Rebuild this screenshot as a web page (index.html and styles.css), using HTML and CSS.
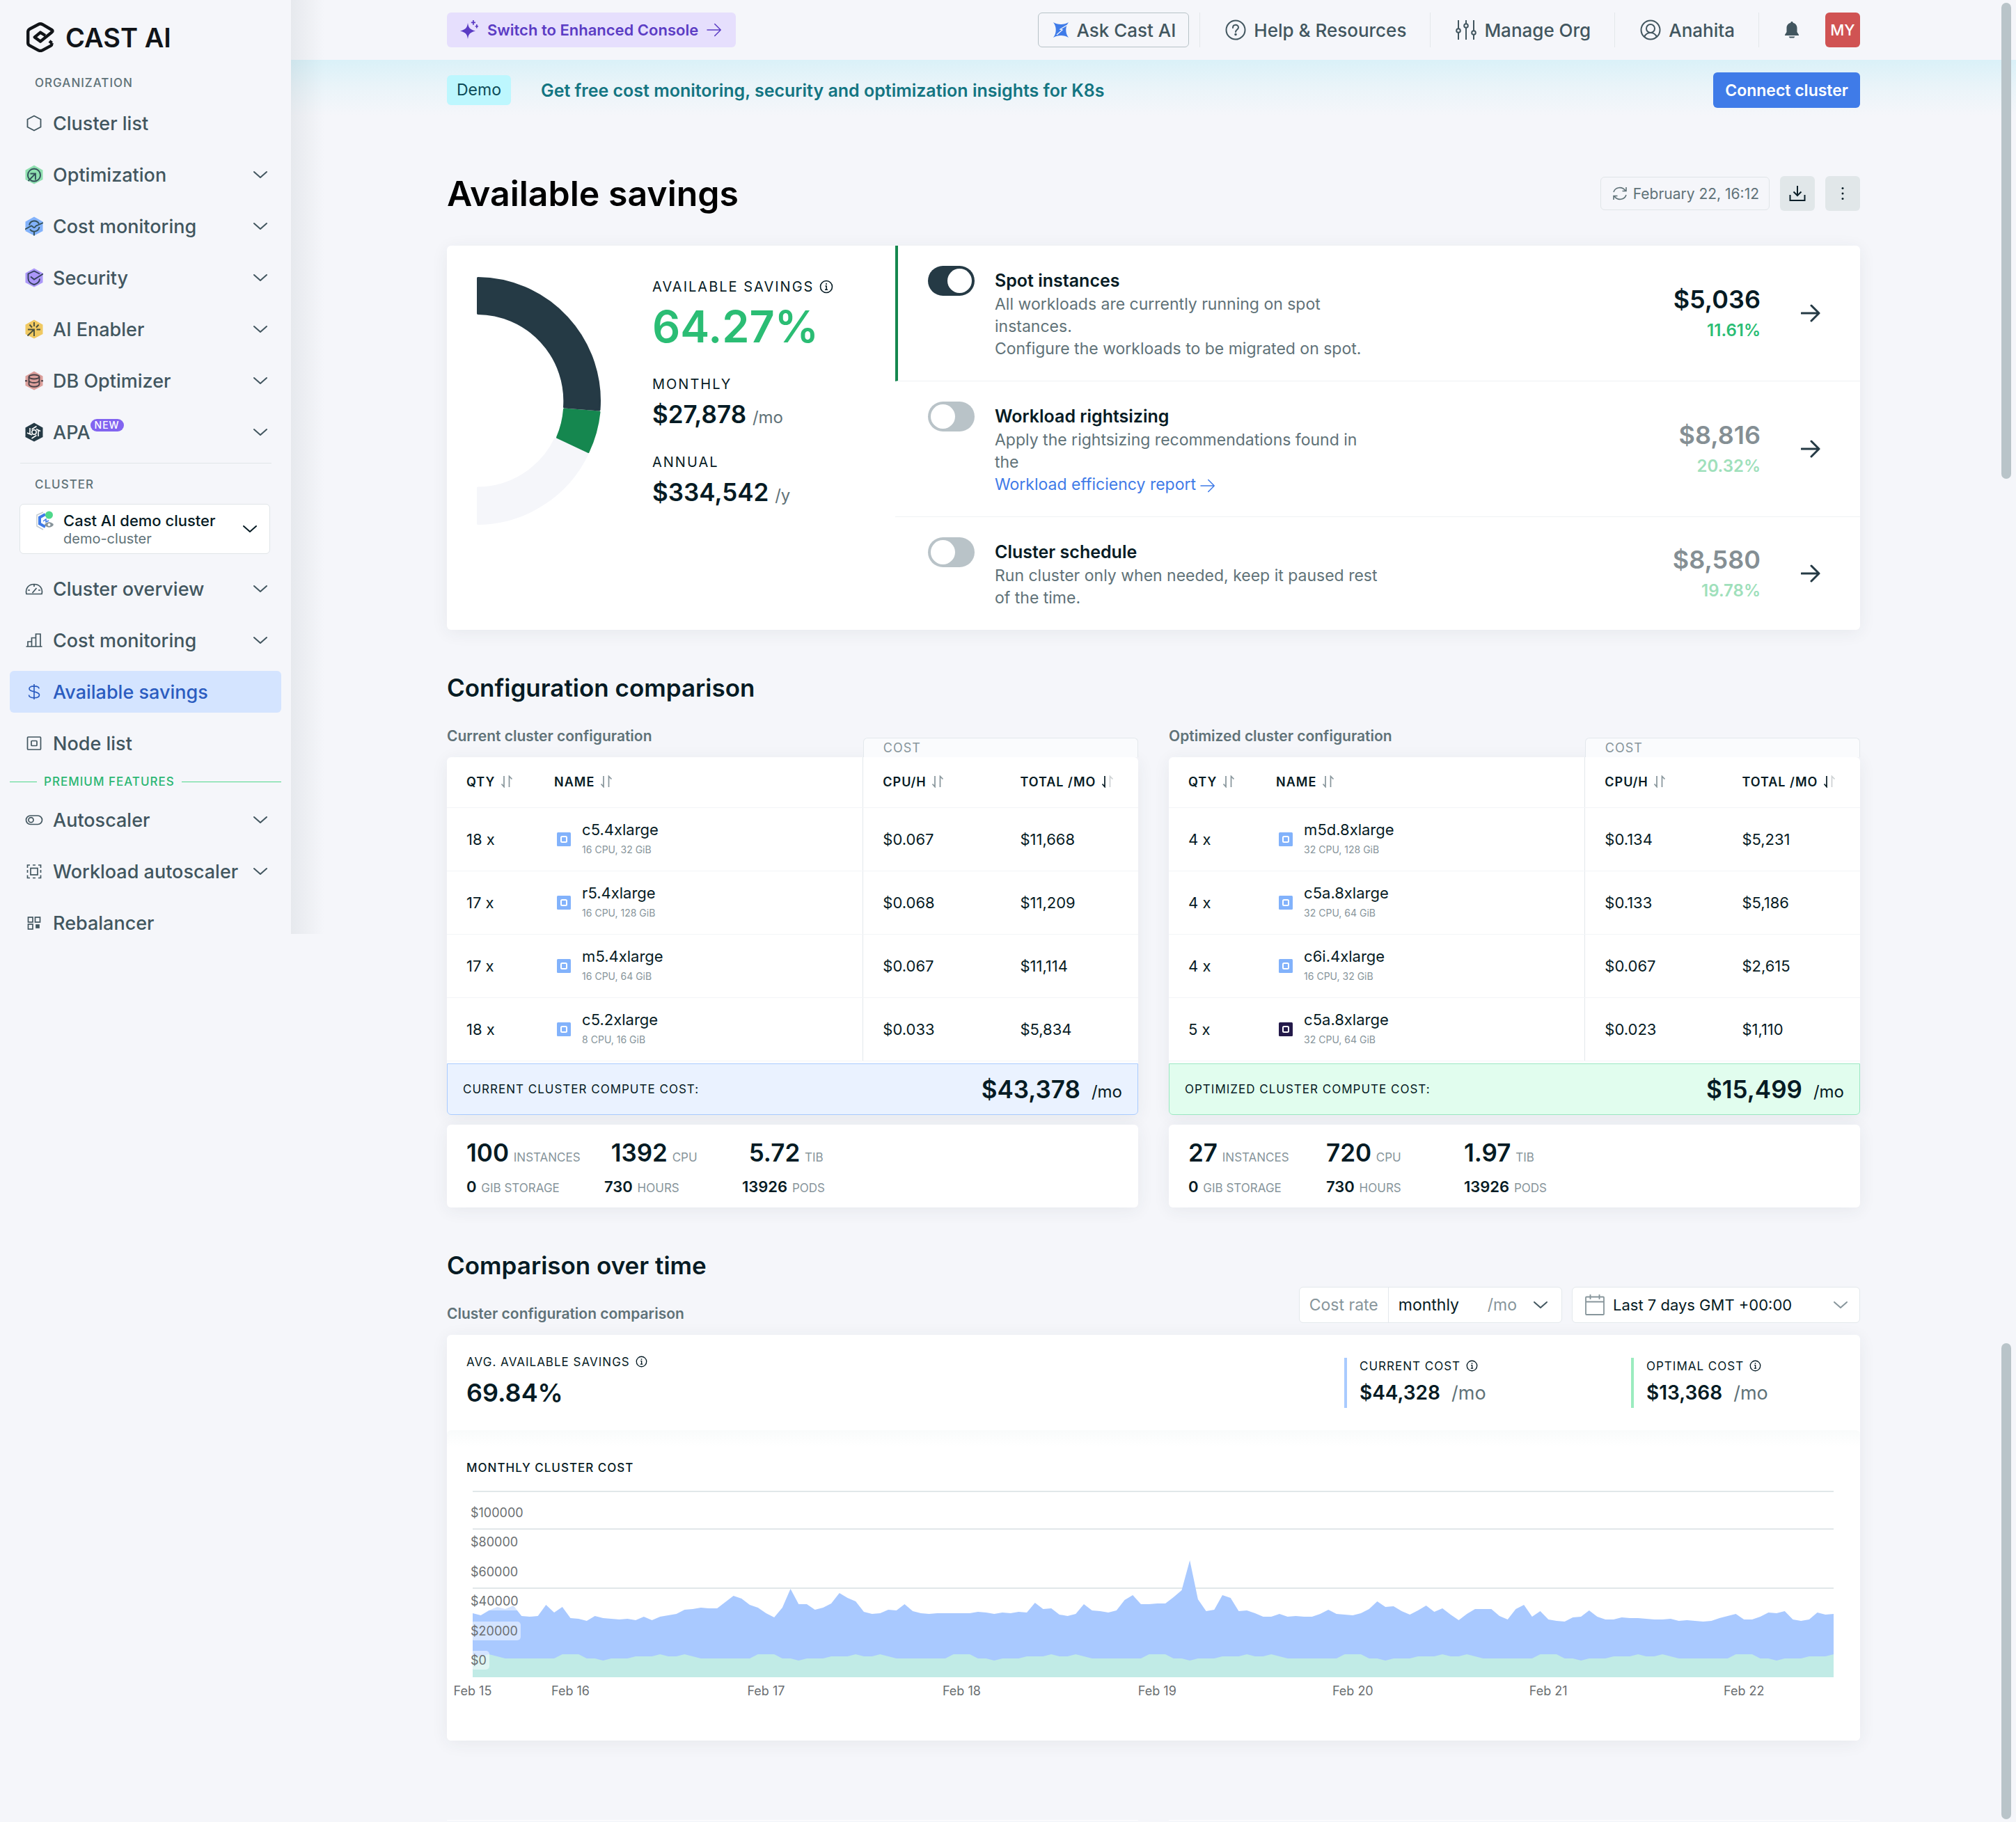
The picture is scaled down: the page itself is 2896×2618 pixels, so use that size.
FILE: index.html
```html
<!DOCTYPE html>
<html lang="en">
<head>
  <meta charset="UTF-8">
  <meta name="viewport" content="width=device-width, initial-scale=1.0">
  <title>Available savings</title>
  <link rel="stylesheet" href="styles.css">
</head>
<body>
  <!-- Shared icons -->
  <svg class="sprite" aria-hidden="true">
    <symbol id="chevron" viewBox="0 0 20 12"><path d="M1 2l9 8 9-8" fill="none" stroke="currentColor" stroke-width="2" stroke-linecap="round" stroke-linejoin="round"/></symbol>
    <symbol id="arrow" viewBox="0 0 28 26"><path d="M1 13h25M15 2l11 11-11 11" fill="none" stroke="currentColor" stroke-linecap="round" stroke-linejoin="round"/></symbol>
    <symbol id="info" viewBox="0 0 20 20"><circle cx="10" cy="10" r="8.500" fill="none" stroke="currentColor" stroke-width="1.600"/><path d="M8.400 9h1.800v5M8 14.200h4" fill="none" stroke="currentColor" stroke-width="1.500"/><circle cx="10" cy="6" r="1.100" fill="currentColor"/></symbol>
    <symbol id="sort" viewBox="0 0 18 18"><path d="M5 1v15M1.500 12.500L5 16.500V13" fill="none" stroke="currentColor" stroke-width="1.700"/><path class="sort-up" d="M12.500 17V2M12.500 5V1.500L16.500 5.500" fill="none" stroke="currentColor" stroke-width="1.700"/></symbol>
    <symbol id="node" viewBox="0 0 20 20"><rect width="20" height="20" rx="1.500" fill="currentColor"/><rect x="6" y="6" width="8" height="8" rx="1.500" fill="none" stroke="#fff" stroke-width="2"/></symbol>
  </svg>

  <div class="layout">
    <aside class="sidebar">
      <a href="#" class="logo">
        <svg viewBox="0 0 40 43" width="40" height="43" fill="none" stroke="#111418" stroke-width="4.400" stroke-linejoin="round"><path d="M36.500 30v.8c0 1.500-.6 2.400-1.800 3.100l-11.500 6.200c-2 1.100-4.400 1.100-6.400 0L4.500 33.400C3 32.600 2.200 31.400 2.200 29.800V13.500c0-1.600.8-2.800 2.300-3.700l12.300-6.600c2-1.100 4.400-1.100 6.400 0l13.300 7.800c1.400.8 1.400 2.300 0 3.200L20 27.600l-8.200-6.200L20 14.600l7 4.400M36.500 30l-3.500-3"/></svg>
        <span>CAST AI</span>
      </a>
      <p class="side-label">ORGANIZATION</p>
      <nav class="side-nav">
        <a href="#" class="side-link">
          <svg class="side-icon" viewBox="0 0 26 28" fill="none" stroke="currentColor" stroke-width="1.800"><path d="M13 3.500l9.500 5v11l-9.500 5-9.500-5v-11z"/></svg>
          <span>Cluster list</span>
        </a>
        <a href="#" class="side-link">
          <svg class="side-icon" viewBox="0 0 26 28" fill="none" stroke="#33515a" stroke-width="1.900"><path d="M13 .5l12.500 7v13.500L13 27.500.5 21V7.500z" fill="#8fe0b0" stroke="none"/><circle cx="13" cy="14.500" r="9"/><path d="M4.500 23L15 12.500M7.500 12.500H15v9"/></svg>
          <span>Optimization</span>
          <svg class="chevron"><use href="#chevron"/></svg>
        </a>
        <a href="#" class="side-link">
          <svg class="side-icon" viewBox="0 0 26 28" fill="none" stroke="#33515a" stroke-width="1.900"><path d="M13 .5l12.500 7v13.500L13 27.500.5 21V7.500z" fill="#82b2fb" stroke="none"/><path d="M0 18.500l8-4.500c2-2 3 2 5 2s2-3 4-3L26 9M6 12.500a7.500 7.500 0 0 1 14-2M20.500 15a7.500 7.500 0 0 1-13.500 3.500M13 22v5.500"/></svg>
          <span>Cost monitoring</span>
          <svg class="chevron"><use href="#chevron"/></svg>
        </a>
        <a href="#" class="side-link">
          <svg class="side-icon" viewBox="0 0 26 28" fill="none" stroke="#33415a" stroke-width="1.900"><path d="M13 .5l12.500 7v13.500L13 27.500.5 21V7.500z" fill="#ab97f8" stroke="none"/><path d="M21 8.500l-8-4-8.500 4V15c0 4 3.500 7.500 8.500 9 5-1.500 8-4.500 8-8.500M8 12.500l5 4L26 8.500"/></svg>
          <span>Security</span>
          <svg class="chevron"><use href="#chevron"/></svg>
        </a>
        <a href="#" class="side-link">
          <svg class="side-icon" viewBox="0 0 26 28" fill="none" stroke="#4a503c" stroke-width="1.900"><path d="M13 .5l12.500 7v13.500L13 27.500.5 21V7.500z" fill="#f0c962" stroke="none"/><path d="M3.500 23.500L13 14.500M4 14.500h9V24M13 4v6M6.500 7.500l3.500 4M19.500 7.500l-3.500 4M16.500 14.500H22"/></svg>
          <span>AI Enabler</span>
          <svg class="chevron"><use href="#chevron"/></svg>
        </a>
        <a href="#" class="side-link">
          <svg class="side-icon" viewBox="0 0 26 28" fill="none" stroke="#4a4247" stroke-width="1.900"><path d="M13 .5l12.500 7v13.500L13 27.500.5 21V7.500z" fill="#dc9f9b" stroke="none"/><ellipse cx="13" cy="8.500" rx="7.500" ry="3"/><path d="M5.500 8.500v10.500c0 2 3.300 3.700 7.500 3.700s7.500-1.700 7.500-3.700V8.500M5.500 13.500c0 2 3.300 3.500 7.500 3.500s7.500-1.500 7.500-3.500M0 14.200h3M23 14.200h3"/></svg>
          <span>DB Optimizer</span>
          <svg class="chevron"><use href="#chevron"/></svg>
        </a>
        <a href="#" class="side-link">
          <svg class="side-icon" viewBox="0 0 26 28" fill="none" stroke="#fff" stroke-width="1.600"><path d="M13 .5l12.500 7v13.500L13 27.500.5 21V7.500z" fill="#253a45" stroke="none"/><circle cx="13" cy="14" r="3.200"/><path d="M7 17V8M9.500 10l7-4.500M10 18l-7-3M16 9.500l6 3M19 11v9M16.500 18.500l-7 4.500"/></svg>
          <span>APA</span>
          <sup class="badge-new">NEW</sup>
          <svg class="chevron"><use href="#chevron"/></svg>
        </a>
      </nav>
      <hr class="side-line">
      <p class="side-label side-label-cluster">CLUSTER</p>
      <button type="button" class="cluster-select">
        <svg viewBox="0 0 26 28" width="26" height="28" fill="none"><path d="M11 27L2 22V6l9-4" stroke="#c3cbd0" stroke-width="1.500"/><path d="M14 5L6 9.500v9l8 4.500" stroke="#3f7be8" stroke-width="4"/><path d="M11 15l4-3v4l4-2" stroke="#3f7be8" stroke-width="1.500"/><circle cx="19.500" cy="6" r="5.500" fill="#4fd88b"/><path d="M13 20c3-5 10-5 13 0-3 5-10 5-13 0z" fill="#87939a"/><circle cx="19.500" cy="20" r="2" fill="#fff"/></svg>
        <span class="cluster-name">Cast AI demo cluster<small>demo-cluster</small></span>
        <svg class="chevron"><use href="#chevron"/></svg>
      </button>
      <nav class="side-nav">
        <a href="#" class="side-link">
          <svg class="side-icon" viewBox="0 0 26 28" fill="none" stroke="currentColor" stroke-width="1.700"><path d="M2 21.500c-2-8 3-14 11-14s13 6 11 14zM13 8v3M4 16h3M22 16h-3M10.500 20l6-7"/></svg>
          <span>Cluster overview</span>
          <svg class="chevron"><use href="#chevron"/></svg>
        </a>
        <a href="#" class="side-link">
          <svg class="side-icon" viewBox="0 0 26 28" fill="none" stroke="currentColor" stroke-width="1.700"><path d="M1.500 23h23M4 23v-7h5.500v7M9.500 16v-5.500h6V23M15.500 10.500V5H22v18"/></svg>
          <span>Cost monitoring</span>
          <svg class="chevron"><use href="#chevron"/></svg>
        </a>
        <a href="#" class="side-link active">
          <svg class="side-icon" viewBox="0 0 26 28" fill="none" stroke="currentColor" stroke-width="1.700"><path d="M13 3v22M20 9.500C20 7 17.500 5.800 13 5.800S6 7.300 6 9.800c0 5.500 14.500 2.700 14.500 8.700 0 2.700-3 4.200-7.500 4.200s-7.500-1.500-7.500-4.200"/></svg>
          <span>Available savings</span>
        </a>
        <a href="#" class="side-link">
          <svg class="side-icon" viewBox="0 0 26 28" fill="none" stroke="currentColor" stroke-width="1.700"><rect x="3.500" y="5" width="19" height="18" rx="1"/><rect x="9" y="10.500" width="8" height="7" rx="1"/></svg>
          <span>Node list</span>
        </a>
      </nav>
      <p class="premium">PREMIUM FEATURES</p>
      <nav class="side-nav">
        <a href="#" class="side-link">
          <svg class="side-icon" viewBox="0 0 26 28" fill="none" stroke="currentColor" stroke-width="1.700"><rect x="1.500" y="8" width="23" height="12.500" rx="6.200"/><circle cx="8.500" cy="14.200" r="3.500"/></svg>
          <span>Autoscaler</span>
          <svg class="chevron"><use href="#chevron"/></svg>
        </a>
        <a href="#" class="side-link">
          <svg class="side-icon" viewBox="0 0 26 28" fill="none" stroke="currentColor" stroke-width="1.700"><rect x="8" y="9.500" width="10" height="9.500"/><path d="M7 5H3.500v4M19 5h3.500v4M7 23.500H3.500v-4M19 23.500h3.500v-4M11 5h4M11 23.500h4M3.500 12v4M22.500 12v4"/></svg>
          <span>Workload autoscaler</span>
          <svg class="chevron"><use href="#chevron"/></svg>
        </a>
        <a href="#" class="side-link">
          <svg class="side-icon" viewBox="0 0 26 28" fill="none" stroke="currentColor" stroke-width="1.700"><rect x="4.500" y="6" width="6.500" height="7"/><rect x="14.500" y="6" width="7" height="7"/><rect x="4.500" y="16" width="6.500" height="7"/><rect x="16" y="17" width="4" height="4" fill="currentColor"/></svg>
          <span>Rebalancer</span>
        </a>
      </nav>
    </aside>

    <div class="page">
      <header class="topbar">
        <div class="container topbar-inner">
          <a href="#" class="switch-btn">
            <svg viewBox="0 0 28 28" width="28" height="28" fill="currentColor"><path d="M12 4c1.200 7.500 3 9.300 11 11.500-8 2.200-9.800 4-11 11.500C10.800 19.500 9 17.700 1 15.500 9 13.300 10.800 11.500 12 4zM19 0h1.800v2.500H23v1.800h-2.200v2.500H19V4.300h-2.200V2.500H19zM24 6h1.600v2H27v1.600h-1.400v2H24v-2h-1.400V8H24z"/></svg>
            <span>Switch to Enhanced Console</span>
            <svg class="arrow arrow-sm"><use href="#arrow"/></svg>
          </a>
          <button type="button" class="ask-btn">
            <svg viewBox="0 0 24 24" width="24" height="24" fill="#3f7be8"><path d="M1 1c6 4 16 4 22 0-5 6-5 16 0 22-6-4-16-4-22 0 5-6 5-16 0-22z"/><path d="M6 19l8-7-3-1 10-6" fill="none" stroke="#f5f6fa" stroke-width="1.300"/></svg>
            <span>Ask Cast AI</span>
          </button>
          <nav class="top-nav">
            <a href="#" class="top-link">
              <svg viewBox="0 0 30 30" width="30" height="30" fill="none" stroke="currentColor" stroke-width="2"><circle cx="15" cy="15" r="13.500"/><path d="M11 12c0-5.500 8-5.500 8-.5 0 3-4 3-4 6.500" stroke-linecap="round"/><circle cx="15" cy="21.500" r=".8" fill="currentColor"/></svg>
              <span>Help &amp; Resources</span>
            </a>
            <a href="#" class="top-link">
              <svg viewBox="0 0 30 30" width="30" height="30" fill="none" stroke="currentColor" stroke-width="2"><path d="M4 1v12M4 19v10M15 1v5M15 12v17M26 1v15M26 22v7"/><circle cx="4" cy="16" r="2.800"/><circle cx="15" cy="9" r="2.800"/><circle cx="26" cy="19" r="2.800"/></svg>
              <span>Manage Org</span>
            </a>
            <a href="#" class="top-link">
              <svg viewBox="0 0 30 30" width="30" height="30" fill="none" stroke="currentColor" stroke-width="2"><circle cx="15" cy="15" r="13.500"/><circle cx="15" cy="13" r="6"/><path d="M6 25c2-4 5-6 9-6s7 2 9 6"/></svg>
              <span>Anahita</span>
            </a>
            <button type="button" class="top-link bell" aria-label="Notifications">
              <svg viewBox="0 0 22 24" width="22" height="24" fill="currentColor"><path d="M11 0c1 0 1.700.7 1.700 1.700 3.700.8 5.800 3.800 5.800 7.300v6l2.500 4v1H1v-1l2.500-4V9c0-3.500 2.100-6.500 5.800-7.300C9.300.7 10 0 11 0zM6.500 21.500h9L14 23.500H8z"/></svg>
            </button>
          </nav>
          <button type="button" class="avatar">MY</button>
        </div>
      </header>

      <div class="banner">
        <div class="container banner-inner">
          <span class="demo-tag">Demo</span>
          <span class="banner-text">Get free cost monitoring, security and optimization insights for K8s</span>
          <button type="button" class="connect-btn">Connect cluster</button>
        </div>
      </div>

      <main class="container">
        <div class="title-row">
          <h1>Available savings</h1>
          <button type="button" class="date-chip">
            <svg viewBox="0 0 22 22" width="22" height="22" fill="none" stroke="currentColor" stroke-width="1.600"><path d="M2 9C4 2 14 0 19 7M20 2v5.500h-5.500M20 13c-2 7-12 9-17 2M2 20v-5.500h5.500"/></svg>
            <span>February 22, 16:12</span>
          </button>
          <button type="button" class="icon-btn" aria-label="Download">
            <svg viewBox="0 0 24 24" width="24" height="24" fill="none" stroke="#0b1f28" stroke-width="2"><path d="M12 1v14M6.500 9.500L12 15l5.500-5.500M1.500 14v8h21v-8"/></svg>
          </button>
          <button type="button" class="icon-btn" aria-label="More">
            <svg viewBox="0 0 24 24" width="24" height="24" fill="#0b1f28"><circle cx="12" cy="4.500" r="1.500"/><circle cx="12" cy="12" r="1.500"/><circle cx="12" cy="19.500" r="1.500"/></svg>
          </button>
        </div>

        <!-- Savings summary -->
        <section class="card savings">
          <div class="summary">
            <svg class="donut" viewBox="0 0 178 356" width="178" height="356" stroke-width="3" stroke-linejoin="round">
              <path d="M1.500 354.500A176.500 176.500 0 0 0 159 254L113 232A125 125 0 0 1 1.500 303z" fill="#f5f6fa" stroke="#f5f6fa"/>
              <path d="M176 194A176.500 176.500 0 0 1 160 251.500L115.500 230.500A125 125 0 0 0 125.500 190z" fill="#15874f" stroke="#15874f"/>
              <path d="M1.500 1.500A176.500 176.500 0 0 1 176 191L125.500 187A125.500 125.500 0 0 0 1.500 52.500z" fill="#253a45" stroke="#253a45"/>
            </svg>
            <dl class="figures">
              <dt>AVAILABLE SAVINGS <svg class="info"><use href="#info"/></svg></dt>
              <dd class="big-percent">64.27%</dd>
              <dt>MONTHLY</dt>
              <dd>$27,878 <small>/mo</small></dd>
              <dt>ANNUAL</dt>
              <dd>$334,542 <small>/y</small></dd>
            </dl>
          </div>
          <div class="options">
            <div class="option enabled">
              <input type="checkbox" class="toggle" id="spot" checked>
              <div class="option-text">
                <label for="spot">Spot instances</label>
                <p>All workloads are currently running on spot<br>instances.<br>Configure the workloads to be migrated on spot.</p>
              </div>
              <div class="amount">$5,036<span>11.61%</span></div>
              <a href="#" class="go" aria-label="Spot instances details"><svg class="arrow"><use href="#arrow"/></svg></a>
            </div>
            <div class="option">
              <input type="checkbox" class="toggle" id="rightsizing">
              <div class="option-text">
                <label for="rightsizing">Workload rightsizing</label>
                <p>Apply the rightsizing recommendations found in<br>the<br><a href="#" class="report-link">Workload efficiency report <svg class="arrow arrow-sm"><use href="#arrow"/></svg></a></p>
              </div>
              <div class="amount">$8,816<span>20.32%</span></div>
              <a href="#" class="go" aria-label="Workload rightsizing details"><svg class="arrow"><use href="#arrow"/></svg></a>
            </div>
            <div class="option">
              <input type="checkbox" class="toggle" id="schedule">
              <div class="option-text">
                <label for="schedule">Cluster schedule</label>
                <p>Run cluster only when needed, keep it paused rest<br>of the time.</p>
              </div>
              <div class="amount">$8,580<span>19.78%</span></div>
              <a href="#" class="go" aria-label="Cluster schedule details"><svg class="arrow"><use href="#arrow"/></svg></a>
            </div>
          </div>
        </section>

        <h2>Configuration comparison</h2>
        <div class="configs">
          <section>
            <div class="config-head">
              <h3>Current cluster configuration</h3>
              <div class="cost-tab">COST</div>
            </div>
            <div class="config-card">
              <table>
                <thead>
                  <tr>
                    <th class="col-qty">QTY <svg class="sort"><use href="#sort"/></svg></th>
                    <th class="col-name">NAME <svg class="sort"><use href="#sort"/></svg></th>
                    <th class="col-cpu">CPU/H <svg class="sort"><use href="#sort"/></svg></th>
                    <th>TOTAL /MO <svg class="sort sorted"><use href="#sort"/></svg></th>
                  </tr>
                </thead>
                <tbody>
                  <tr>
                    <td>18 x</td>
                    <td><div class="node"><svg><use href="#node"/></svg><span>c5.4xlarge<small>16 CPU, 32 GiB</small></span></div></td>
                    <td class="col-cpu">$0.067</td>
                    <td>$11,668</td>
                  </tr>
                  <tr>
                    <td>17 x</td>
                    <td><div class="node"><svg><use href="#node"/></svg><span>r5.4xlarge<small>16 CPU, 128 GiB</small></span></div></td>
                    <td class="col-cpu">$0.068</td>
                    <td>$11,209</td>
                  </tr>
                  <tr>
                    <td>17 x</td>
                    <td><div class="node"><svg><use href="#node"/></svg><span>m5.4xlarge<small>16 CPU, 64 GiB</small></span></div></td>
                    <td class="col-cpu">$0.067</td>
                    <td>$11,114</td>
                  </tr>
                  <tr>
                    <td>18 x</td>
                    <td><div class="node"><svg><use href="#node"/></svg><span>c5.2xlarge<small>8 CPU, 16 GiB</small></span></div></td>
                    <td class="col-cpu">$0.033</td>
                    <td>$5,834</td>
                  </tr>
                </tbody>
              </table>
              <div class="total total-current">
                <span>CURRENT CLUSTER COMPUTE COST:</span>
                <strong>$43,378</strong>
                <small>/mo</small>
              </div>
            </div>
            <div class="card stats">
              <div class="stats-row stats-main">
                <span><b>100</b> INSTANCES</span>
                <span><b>1392</b> CPU</span>
                <span><b>5.72</b> TIB</span>
              </div>
              <div class="stats-row">
                <span><b>0</b> GIB STORAGE</span>
                <span><b>730</b> HOURS</span>
                <span><b>13926</b> PODS</span>
              </div>
            </div>
          </section>

          <section>
            <div class="config-head">
              <h3>Optimized cluster configuration</h3>
              <div class="cost-tab">COST</div>
            </div>
            <div class="config-card">
              <table>
                <thead>
                  <tr>
                    <th class="col-qty">QTY <svg class="sort"><use href="#sort"/></svg></th>
                    <th class="col-name">NAME <svg class="sort"><use href="#sort"/></svg></th>
                    <th class="col-cpu">CPU/H <svg class="sort"><use href="#sort"/></svg></th>
                    <th>TOTAL /MO <svg class="sort sorted"><use href="#sort"/></svg></th>
                  </tr>
                </thead>
                <tbody>
                  <tr>
                    <td>4 x</td>
                    <td><div class="node"><svg><use href="#node"/></svg><span>m5d.8xlarge<small>32 CPU, 128 GiB</small></span></div></td>
                    <td class="col-cpu">$0.134</td>
                    <td>$5,231</td>
                  </tr>
                  <tr>
                    <td>4 x</td>
                    <td><div class="node"><svg><use href="#node"/></svg><span>c5a.8xlarge<small>32 CPU, 64 GiB</small></span></div></td>
                    <td class="col-cpu">$0.133</td>
                    <td>$5,186</td>
                  </tr>
                  <tr>
                    <td>4 x</td>
                    <td><div class="node"><svg><use href="#node"/></svg><span>c6i.4xlarge<small>16 CPU, 32 GiB</small></span></div></td>
                    <td class="col-cpu">$0.067</td>
                    <td>$2,615</td>
                  </tr>
                  <tr>
                    <td>5 x</td>
                    <td><div class="node node-spot"><svg><use href="#node"/></svg><span>c5a.8xlarge<small>32 CPU, 64 GiB</small></span></div></td>
                    <td class="col-cpu">$0.023</td>
                    <td>$1,110</td>
                  </tr>
                </tbody>
              </table>
              <div class="total total-optimized">
                <span>OPTIMIZED CLUSTER COMPUTE COST:</span>
                <strong>$15,499</strong>
                <small>/mo</small>
              </div>
            </div>
            <div class="card stats">
              <div class="stats-row stats-main">
                <span><b>27</b> INSTANCES</span>
                <span><b>720</b> CPU</span>
                <span><b>1.97</b> TIB</span>
              </div>
              <div class="stats-row">
                <span><b>0</b> GIB STORAGE</span>
                <span><b>730</b> HOURS</span>
                <span><b>13926</b> PODS</span>
              </div>
            </div>
          </section>
        </div>

        <h2>Comparison over time</h2>
        <div class="time-head">
          <h3>Cluster configuration comparison</h3>
          <div class="field">
            <label for="rate">Cost rate</label>
            <select id="rate"><option>monthly</option><option>hourly</option></select>
            <span class="field-unit">/mo</span>
            <svg class="chevron"><use href="#chevron"/></svg>
          </div>
          <button type="button" class="field date-field">
            <svg viewBox="0 0 28 30" width="28" height="30" fill="none" stroke="#87959b" stroke-width="1.800"><rect x="1" y="3.500" width="26" height="25.500" rx="1"/><path d="M1 10.500h26M7.500 0v7M20.500 0v7"/></svg>
            <span>Last 7 days GMT +00:00</span>
            <svg class="chevron"><use href="#chevron"/></svg>
          </button>
        </div>

        <section class="card">
          <div class="cost-summary">
            <div class="avg">
              <p>AVG. AVAILABLE SAVINGS <svg class="info"><use href="#info"/></svg></p>
              <strong>69.84%</strong>
            </div>
            <div class="cost cost-current">
              <p>CURRENT COST <svg class="info"><use href="#info"/></svg></p>
              <div><strong>$44,328</strong><small>/mo</small></div>
            </div>
            <div class="cost cost-optimal">
              <p>OPTIMAL COST <svg class="info"><use href="#info"/></svg></p>
              <div><strong>$13,368</strong><small>/mo</small></div>
            </div>
          </div>
          <div class="chart">
            <h4>MONTHLY CLUSTER COST</h4>
            <div class="plot">
              <svg id="costChart" viewBox="0 0 167 268" preserveAspectRatio="none" role="img" aria-label="Monthly cluster cost"></svg>
              <ul class="y-labels">
                <li><span>$100000</span></li>
                <li><span>$80000</span></li>
                <li><span>$60000</span></li>
                <li><span>$40000</span></li>
                <li><span>$20000</span></li>
                <li><span>$0</span></li>
              </ul>
            </div>
            <div class="x-labels" id="days"></div>
          </div>
        </section>

        <div class="configs more">
          <div class="card"></div>
          <div class="card"></div>
        </div>
      </main>
    </div>
  </div>

  <div class="scroll-thumb"></div>
  <div class="scroll-thumb scroll-thumb-bottom"></div>

  <script src="script.js"></script>
</body>
</html>
```
FILE: styles.css
```css
* {
  box-sizing: border-box;
}

body {
  margin: 0;
  min-height: 100vh;
  position: relative;
  background-color: #f5f6fa;
  color: #061b24;
  font-family: Inter, "Open Sans", sans-serif;
  font-size: 22px;
}

h1, h2, h3, h4, p, dl, dd, ul {
  margin: 0;
  padding: 0;
}

a {
  color: inherit;
  text-decoration: none;
}

button, select {
  font: inherit;
  color: inherit;
  border: 0;
  background: none;
  padding: 0;
  cursor: pointer;
}

.sprite {
  position: absolute;
  width: 0;
  height: 0;
}

.layout {
  display: flex;
  align-items: flex-start;
}

.chevron {
  width: 20px;
  height: 12px;
  flex: none;
}

.arrow {
  width: 28px;
  height: 26px;
  flex: none;
  stroke-width: 3px;
}

.arrow-sm {
  width: 22px;
  height: 20px;
  stroke-width: 2px;
}

.info {
  width: 20px;
  height: 20px;
}

/* Sidebar */
.sidebar {
  position: relative;
  z-index: 2;
  flex: none;
  width: 418px;
  height: 51.25vh;
  padding: 32px 14px 0;
  background-color: #f5f6fa;
}

.sidebar::after {
  content: "";
  position: absolute;
  top: 0;
  bottom: 0;
  left: 100%;
  width: 48px;
  background: linear-gradient(to right, rgba(37, 58, 69, 0.07), rgba(37, 58, 69, 0));
}

.logo {
  display: flex;
  align-items: center;
  gap: 16px;
  height: 43px;
  margin-left: 24px;
  color: #111418;
  font-size: 38px;
  font-weight: 600;
}

.side-label {
  margin: 30px 0 0 36px;
  line-height: 28px;
  font-size: 17px;
  font-weight: 500;
  letter-spacing: 1px;
  color: #5f7278;
}

.side-label-cluster {
  margin-top: 16px;
}

.side-nav {
  display: flex;
  flex-direction: column;
  gap: 14px;
  margin-top: 14px;
}

.side-link {
  display: flex;
  align-items: center;
  height: 60px;
  padding: 0 20px 0 22px;
  border-radius: 6px;
  font-size: 27px;
  font-weight: 500;
  color: #42565f;
}

.side-icon {
  flex: none;
  width: 26px;
  height: 28px;
  margin-right: 14px;
}

.side-link .chevron {
  margin-left: auto;
}

.side-link.active {
  background-color: #d4e4ff;
  color: #2b5cc0;
}

.badge-new {
  align-self: flex-start;
  margin-top: 11px;
  padding: 0 6px;
  border-radius: 9px;
  line-height: 18px;
  font-size: 14px;
  letter-spacing: 1px;
  color: #fff;
  background-color: #8264f0;
}

.side-line {
  margin: 14px 14px 0 15px;
  border: 0;
  border-top: 1px solid #e0e5e8;
}

.cluster-select {
  display: flex;
  align-items: flex-start;
  width: 360px;
  height: 72px;
  margin: 14px 0 0 14px;
  padding: 9px 18px 0 22px;
  border: 1px solid #e0e5e8;
  border-radius: 6px;
  background-color: #fff;
  text-align: left;
}

.cluster-select + .side-nav {
  margin-top: 20px;
}

.cluster-select .chevron {
  align-self: center;
  margin: 0 0 9px auto;
}

.cluster-name {
  margin-left: 14px;
  font-size: 22px;
  font-weight: 500;
  line-height: 28px;
  white-space: nowrap;
}

.cluster-name small {
  display: block;
  font-size: 20px;
  font-weight: 400;
  line-height: 24px;
  color: #5f7278;
}

.premium {
  display: flex;
  align-items: center;
  gap: 10px;
  margin-top: 11px;
  line-height: 28px;
  font-size: 17px;
  font-weight: 500;
  letter-spacing: 1px;
  color: #2bb673;
}

.premium::before,
.premium::after {
  content: "";
  width: 39px;
  border-top: 1px solid #4fd88b;
}

.premium::after {
  flex: 1;
}

.premium + .side-nav {
  margin-top: 11px;
}

/* Top bar */
.page {
  flex: 1;
  min-width: 0;
}

.container {
  max-width: 2030px;
  margin: 0 auto;
}

.topbar-inner {
  display: flex;
  align-items: center;
  height: 86px;
}

.switch-btn,
.ask-btn,
.avatar {
  height: 50px;
  border-radius: 6px;
}

.switch-btn {
  display: flex;
  align-items: center;
  gap: 12px;
  padding: 0 20px 0 18px;
  margin-right: auto;
  background-color: #e6dffd;
  color: #5b3cc4;
  font-size: 22px;
  font-weight: 600;
}

.ask-btn {
  display: flex;
  align-items: center;
  gap: 10px;
  margin-right: 15px;
  padding: 0 18px 0 20px;
  border: 1px solid #b7c2c7;
}

.ask-btn,
.top-link {
  font-size: 26px;
  font-weight: 500;
  color: #42565f;
}

.top-nav {
  display: flex;
}

.top-link {
  display: flex;
  align-items: center;
  gap: 11px;
  height: 50px;
  padding: 0 34px 0 36px;
  border-left: 1px solid #e4e8eb;
}

.bell {
  padding-right: 37px;
}

.avatar {
  width: 50px;
  background-color: #d05353;
  color: #fff;
  font-size: 22px;
  font-weight: 500;
}

.banner {
  background: linear-gradient(#daf1f8, #eaf4f9 45%, #f5f6fa 92%);
}

.banner-inner {
  display: flex;
  align-items: center;
  height: 87px;
}

.demo-tag {
  margin-right: 43px;
  padding: 0 14px;
  border-radius: 6px;
  line-height: 43px;
  font-size: 23px;
  color: #0b4a57;
  background-color: #bdf7fe;
}

.banner-text {
  font-size: 25px;
  font-weight: 600;
  color: #137582;
}

.connect-btn {
  height: 51px;
  margin-left: auto;
  padding: 0 17px;
  border-radius: 6px;
  background-color: #3f7be8;
  color: #fff;
  font-size: 23px;
  font-weight: 600;
}

/* Page title */
.title-row {
  display: flex;
  align-items: center;
  gap: 15px;
  margin-top: 75px;
  margin-bottom: 45px;
}

h1 {
  margin-right: auto;
  font-size: 50px;
  font-weight: 600;
  line-height: 60px;
  color: #000;
}

.date-chip {
  display: flex;
  align-items: center;
  gap: 8px;
  height: 48px;
  padding: 0 14px 0 16px;
  border: 1px solid #e0e5e8;
  border-radius: 6px;
  font-size: 21px;
  color: #5f7278;
}

.icon-btn {
  display: flex;
  align-items: center;
  justify-content: center;
  width: 50px;
  height: 50px;
  border-radius: 6px;
  background-color: #e1e7e9;
}

/* Savings card */
.card {
  border-radius: 6px;
  background-color: #fff;
  box-shadow: 0 4px 24px rgba(37, 58, 69, 0.07);
}

.savings {
  display: grid;
  grid-template-columns: 644px 1fr;
}

.summary {
  display: flex;
  gap: 74px;
  padding: 45px 0 0 43px;
}

.donut {
  flex: none;
}

.figures dt {
  display: flex;
  align-items: center;
  gap: 8px;
  margin-top: 33px;
  line-height: 28px;
  font-size: 20px;
  letter-spacing: 2px;
}

.figures dt:first-child {
  margin-top: 0;
}

.figures dd {
  height: 44px;
  margin-top: 7px;
  font-size: 35px;
  font-weight: 600;
  line-height: 44px;
}

.figures .big-percent {
  height: 72px;
  font-size: 63px;
  line-height: 72px;
  color: #2bbd74;
}

small {
  font-weight: 400;
}

.figures small {
  font-size: 24px;
  line-height: 1;
  color: #5f7278;
}

.option {
  display: flex;
  padding: 29px 57px 30px 47px;
  border-bottom: 1px solid #eff2f4;
}

.option:last-child {
  border-bottom: 0;
}

.option.enabled {
  padding-left: 43px;
  border-left: 4px solid #15874f;
}

.toggle {
  appearance: none;
  flex: none;
  width: 67px;
  height: 43px;
  margin: 0;
  padding: 4px;
  border-radius: 22px;
  background-color: #b9c3c8;
  cursor: pointer;
}

.toggle::before {
  content: "";
  display: block;
  width: 35px;
  height: 35px;
  border-radius: 50%;
  background-color: #fff;
}

.toggle:checked {
  background-color: #253a45;
}

.toggle:checked::before {
  margin-left: auto;
}

.option-text {
  margin: 5px auto 0 29px;
}

.option-text label {
  display: block;
  margin-bottom: 2px;
  font-size: 25px;
  font-weight: 600;
  line-height: 32px;
}

.option-text p {
  font-size: 23px;
  line-height: 32px;
  color: #5f7278;
}

.report-link {
  color: #3f7be8;
}

.report-link .arrow {
  vertical-align: middle;
}

.amount {
  align-self: center;
  padding-top: 4px;
  font-size: 36px;
  font-weight: 600;
  line-height: 46px;
  text-align: right;
  color: #858f94;
}

.amount span {
  display: block;
  font-size: 24px;
  line-height: 44px;
  color: #9fe0bb;
}

.enabled .amount {
  color: #061b24;
}

.enabled .amount span {
  color: #2bbd74;
}

.go {
  align-self: center;
  margin-left: 58px;
  color: #253a45;
}

.go .arrow {
  display: block;
}

/* Configuration comparison */
h2 {
  margin-top: 61px;
  font-size: 35px;
  font-weight: 600;
  line-height: 44px;
}

h3 {
  font-size: 21px;
  font-weight: 600;
  line-height: 28px;
  color: #5f7278;
}

.configs {
  display: grid;
  grid-template-columns: 1fr 1fr;
  gap: 44px;
  margin-top: 34px;
}

.config-head {
  display: flex;
  justify-content: space-between;
}

.cost-tab {
  width: 39.8%;
  height: 28px;
  margin-top: 16px;
  padding-left: 28px;
  border: 1px solid #e3e8ec;
  border-bottom: 0;
  border-radius: 6px 6px 0 0;
  background-color: #fafbfd;
  font-size: 18px;
  letter-spacing: 1px;
  line-height: 27px;
  color: #87959b;
}

.config-card {
  border-radius: 6px;
  background-color: #fff;
  box-shadow: 0 4px 24px rgba(37, 58, 69, 0.07);
}

table {
  width: 100%;
  table-layout: fixed;
  border-collapse: collapse;
}

th, td {
  padding: 0 0 0 28px;
  border-bottom: 1px solid #f3f5f7;
  text-align: left;
}

th {
  height: 72px;
  font-size: 18px;
  font-weight: 600;
  letter-spacing: 1px;
  white-space: nowrap;
}

td {
  height: 91px;
  font-size: 22px;
}

.col-qty {
  width: 12.7%;
}

.col-name {
  width: 47.5%;
}

.col-cpu {
  width: 19.9%;
  border-left: 1px solid #e3e8ec;
}

.sort {
  width: 18px;
  height: 18px;
  margin-left: 2px;
  vertical-align: -2px;
  color: #87959b;
}

.sort-up {
  opacity: var(--sort-up, 1);
}

.sorted {
  --sort-up: 0.2;
  color: #061b24;
}

.node {
  display: flex;
  align-items: center;
}

.node svg {
  width: 20px;
  height: 20px;
  margin: 0 16px 0 4px;
  color: #82b2fb;
}

.node-spot svg {
  color: #241a4a;
}

.node small {
  display: block;
  margin-top: 4px;
  font-size: 14px;
  line-height: 24px;
  color: #87959b;
}

.total {
  display: flex;
  align-items: center;
  height: 74px;
  margin-top: 3px;
  padding: 0 22px;
  border: 1px solid;
  border-radius: 0 0 6px 6px;
}

.total span {
  margin-right: auto;
  font-size: 17px;
  letter-spacing: 1px;
}

.total strong {
  margin-right: 16px;
  font-size: 35px;
  font-weight: 600;
}

.total small {
  padding-top: 8px;
  font-size: 24px;
}

.total-current {
  border-color: #a9cbff;
  background-color: #eaf2ff;
}

.total-optimized {
  border-color: #9be8c2;
  background-color: #e1fdee;
}

.stats {
  margin-top: 14px;
  padding: 18px 28px 14px;
}

.stats-row {
  display: flex;
  align-items: center;
  gap: 44px;
  height: 32px;
}

.stats-row span {
  min-width: 154px;
  font-size: 17px;
  color: #87959b;
  white-space: nowrap;
}

.stats-row b {
  margin-right: 2px;
  font-size: 22px;
  font-weight: 600;
  color: #061b24;
}

.stats-main {
  height: 44px;
  margin-bottom: 11px;
}

.stats-main b {
  font-size: 35px;
}

/* Comparison over time */
.time-head {
  display: flex;
  gap: 14px;
  margin: 9px 0 16px;
}

.time-head h3 {
  margin-right: auto;
  padding-top: 25px;
}

.field {
  display: flex;
  align-items: center;
  height: 52px;
  border: 1px solid #e3e8ec;
  border-radius: 6px;
  background-color: #fff;
}

.field label {
  padding: 0 14px;
  border-right: 1px solid #e3e8ec;
  line-height: 50px;
  font-size: 23px;
  color: #87959b;
}

.field select {
  appearance: none;
  width: 128px;
  padding-left: 14px;
  font-size: 23px;
}

.field-unit {
  margin: 0 24px 0 14px;
  font-size: 23px;
  color: #87959b;
}

.field .chevron {
  margin-right: 20px;
  color: #42565f;
}

.date-field {
  width: 414px;
  padding-left: 18px;
}

.date-field span {
  margin: 0 auto 0 12px;
}

.date-field .chevron {
  margin-right: 17px;
  color: #87959b;
}

.cost-summary {
  display: flex;
  align-items: flex-end;
  padding: 25px 28px 32px;
}

.cost-summary p {
  display: flex;
  align-items: center;
  gap: 8px;
  font-size: 17px;
  letter-spacing: 1px;
}

.avg {
  margin-right: auto;
}

.avg p {
  margin-bottom: 8px;
  line-height: 28px;
}

.avg strong {
  display: block;
  font-size: 36px;
  font-weight: 600;
  line-height: 44px;
}

.cost {
  width: 412px;
  padding-left: 18px;
  border-left: 4px solid #a9cbff;
}

.cost-optimal {
  width: 301px;
  border-left-color: #9becbf;
}

.cost p {
  line-height: 24px;
}

.cost div {
  height: 44px;
  margin-top: 4px;
  line-height: 44px;
}

.cost strong {
  margin-right: 16px;
  font-size: 28px;
  font-weight: 600;
}

.cost small {
  font-size: 27px;
  color: #5f7278;
}

.cost .info,
.avg .info {
  width: 17px;
  height: 17px;
}

.chart {
  padding: 40px 38px 59px 37px;
  background: linear-gradient(#f9fbfb, #fff 24px);
  border-radius: 6px;
}

h4 {
  margin: 0 0 19px -9px;
  font-size: 17px;
  font-weight: 500;
  letter-spacing: 1px;
  line-height: 28px;
}

.plot {
  position: relative;
}

.plot svg {
  display: block;
  width: 100%;
  height: 268px;
}

.grid-line {
  stroke: #e1e7e9;
  stroke-width: 2px;
  vector-effect: non-scaling-stroke;
}

.area-current {
  fill: #a9c9ff;
}

.area-optimal {
  fill: #c1ebe6;
}

/* Value labels lie over the areas */
.y-labels {
  display: flex;
  flex-direction: column;
  position: absolute;
  top: 11px;
  left: -3px;
  height: 255px;
  list-style: none;
}

.y-labels li {
  flex: 1;
  line-height: 42px;
}

.y-labels span {
  padding: 3px 4px 3px 0;
  border-radius: 5px;
  background-color: rgba(255, 255, 255, 0.5);
}

.y-labels,
.x-labels {
  font-size: 18px;
  color: #6b6f72;
}

.x-labels {
  position: relative;
  height: 24px;
  margin-top: 8px;
  line-height: 24px;
}

.x-labels span {
  position: absolute;
  transform: translateX(-50%);
  white-space: nowrap;
}

.more {
  margin-top: 114px;
}

.more .card {
  height: 1px;
}

/* Scroll thumbs */
.scroll-thumb {
  position: absolute;
  top: 4px;
  right: 7px;
  width: 14px;
  height: 684px;
  border-radius: 7px;
  background-color: #b9c4c9;
}

.scroll-thumb-bottom {
  top: auto;
  bottom: 4px;
}
```
FILE: script.js
```js
// Hourly cost of the current cluster, as bar heights over the base line
const current = [
  92, 89, 96, 101, 98, 103, 88, 87, 88, 104, 93, 101,
  85, 84, 81, 88, 85, 84, 83, 84, 82, 87, 82, 87,
  89, 91, 97, 98, 100, 99, 99, 108, 117, 113, 104, 100,
  92, 86, 100, 127, 105, 105, 97, 100, 106, 121, 114, 109,
  94, 91, 92, 97, 96, 105, 95, 92, 91, 92, 92, 92,
  92, 92, 94, 93, 91, 93, 92, 94, 93, 107, 98, 99,
  90, 88, 91, 105, 96, 95, 93, 96, 111, 118, 105, 105,
  106, 106, 115, 125, 168, 112, 95, 97, 118, 114, 95, 96,
  92, 87, 87, 91, 87, 88, 87, 87, 91, 97, 91, 90,
  89, 92, 98, 109, 101, 102, 95, 90, 96, 103, 94, 99,
  90, 82, 91, 98, 98, 98, 88, 83, 98, 104, 87, 95,
  83, 81, 80, 86, 87, 96, 87, 83, 83, 86, 85, 85,
  84, 83, 83, 84, 81, 82, 81, 80, 81, 85, 88, 91,
  83, 83, 87, 93, 92, 95, 83, 81, 83, 93, 90, 91
];

// The optimal cost repeats the same pattern every day
const optimalDay = [
  30, 30, 33, 30, 27, 27, 27, 27, 27, 27, 27, 33,
  33, 33, 27, 27, 24, 27, 27, 27, 30, 30, 30, 33
];
const optimal = current.map((value, hour) => optimalDay[hour % 24]);

const height = 268;

function areaPath(values) {
  const points = values.map((value, i) => `${i} ${height - value}`);
  return `M0 ${height}L${points.join('L')}L${values.length - 1} ${height}Z`;
}

const lines = [1, 55, 140].map(y => `<line class="grid-line" x1="0" x2="167" y1="${y}" y2="${y}"/>`);
document.getElementById('costChart').innerHTML =
  lines.join('') +
  `<path class="area-current" d="${areaPath(current)}"/>` +
  `<path class="area-optimal" d="${areaPath(optimal)}"/>`;

const days = [['Feb 15', 0], ['Feb 16', 12], ['Feb 17', 36], ['Feb 18', 60],
  ['Feb 19', 84], ['Feb 20', 108], ['Feb 21', 132], ['Feb 22', 156]];
document.getElementById('days').innerHTML = days
  .map(([name, hour]) => `<span style="left: ${hour / 167 * 100}%">${name}</span>`)
  .join('');
```
